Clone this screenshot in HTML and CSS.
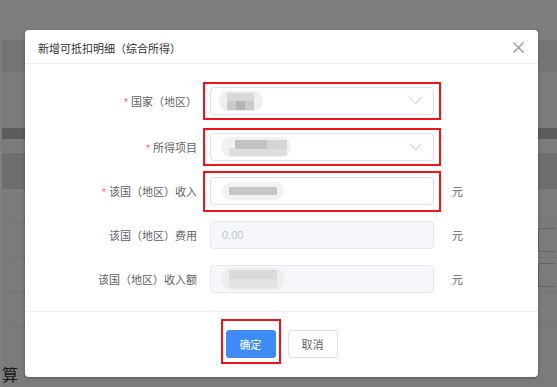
FILE: index.html
```html
<!DOCTYPE html>
<html lang="zh-CN">
<head>
    <meta charset="UTF-8">
    <meta name="viewport" content="width=device-width, initial-scale=1.0">
    <title>新增可抵扣明细</title>
    <link rel="stylesheet" href="styles.css">
</head>
<body>
    <div class="page">
        <div class="band band-top"></div>
        <div class="band band-tabs"></div>
        <div class="band band-plain"></div>
        <div class="band band-dark"></div>
        <div class="band band-gap"></div>
        <div class="band band-head"></div>
        <div class="band band-row"></div>
        <div class="band band-row tall"><span class="ghost-box"></span></div>
        <div class="band band-row tall"><span class="ghost-box"></span></div>
        <div class="band band-row"></div>
        <div class="band band-last"><span class="calc">算</span></div>
    </div>

    <div class="mask"></div>

    <div class="dialog">
        <div class="dialog-header">
            <span class="dialog-title">新增可抵扣明细（综合所得）</span>
            <svg class="close" width="11" height="11" viewBox="0 0 11 11">
                <path d="M0.5 0.5 L10.5 10.5 M10.5 0.5 L0.5 10.5" stroke="#909399" stroke-width="1.1" fill="none"/>
            </svg>
        </div>

        <div class="dialog-body">
            <div class="form-row first">
                <label class="form-label"><i class="req">*</i>国家（地区）</label>
                <div class="field marked">
                    <span class="blur blur-country"></span>
                    <svg class="arrow" width="11" height="6" viewBox="0 0 11 6">
                        <path d="M0.5 0.5 L5.5 5.5 L10.5 0.5" stroke="#c0c4cc" stroke-width="1" fill="none"/>
                    </svg>
                </div>
            </div>

            <div class="form-row">
                <label class="form-label"><i class="req">*</i>所得项目</label>
                <div class="field marked">
                    <span class="blur blur-item"></span>
                    <svg class="arrow" width="11" height="6" viewBox="0 0 11 6">
                        <path d="M0.5 0.5 L5.5 5.5 L10.5 0.5" stroke="#c0c4cc" stroke-width="1" fill="none"/>
                    </svg>
                </div>
            </div>

            <div class="form-row">
                <label class="form-label"><i class="req">*</i>该国（地区）收入</label>
                <div class="field marked tall-mark">
                    <span class="blur blur-income"></span>
                </div>
                <span class="unit">元</span>
            </div>

            <div class="form-row">
                <label class="form-label">该国（地区）费用</label>
                <div class="field disabled">0.00</div>
                <span class="unit">元</span>
            </div>

            <div class="form-row">
                <label class="form-label">该国（地区）收入额</label>
                <div class="field disabled">
                    <span class="blur blur-amount"></span>
                </div>
                <span class="unit">元</span>
            </div>
        </div>

        <div class="dialog-footer">
            <button class="btn btn-primary marked-btn">确定</button>
            <button class="btn">取消</button>
        </div>
    </div>
</body>
</html>
```

FILE: styles.css
```css
* {
    box-sizing: border-box;
}

body {
    margin: 0;
    width: 557px;
    height: 387px;
    overflow: hidden;
    position: relative;
    font-family: "Liberation Sans", "Noto Sans CJK SC", sans-serif;
    background-color: #fff;
}

/* page behind the dialog */
.page {
    height: 387px;
    overflow: hidden;
    border-left: 2px solid #fff;
}

.band {
    background-color: #f7f7f7;
}

.band-top {
    height: 40px;
    background-color: #fdfdfd;
}

.band-tabs {
    height: 32px;
    background-color: #e8e8e8;
}

.band-plain {
    height: 56px;
}

.band-dark {
    height: 11px;
    background-color: #b8b8b8;
}

.band-gap {
    height: 14px;
}

.band-head {
    height: 36px;
    background-color: #dcdcdc;
}

.band-row {
    height: 34px;
    border-bottom: 1px solid #e6e6e6;
    display: flex;
    justify-content: flex-end;
    align-items: center;
}

.band-row.tall {
    height: 35px;
}

.ghost-box {
    width: 17px;
    height: 24px;
    border: 1px solid #c8c8c8;
    border-right: none;
    border-radius: 3px 0 0 3px;
    margin-right: 2px;
}

.band-last {
    height: 60px;
    position: relative;
}

.calc {
    position: absolute;
    left: 0;
    bottom: 1px;
    font-size: 16px;
    line-height: 20px;
    color: #333;
}

.mask {
    position: absolute;
    inset: 0;
    background-color: rgba(0, 0, 0, 0.5);
}

/* dialog */
.dialog {
    position: absolute;
    left: 25px;
    top: 30px;
    width: 513px;
    background-color: #fff;
    border-radius: 4px;
    box-shadow: 0 1px 3px rgba(0, 0, 0, 0.3);
}

.dialog-header {
    height: 34px;
    padding: 0 14px 0 13px;
    display: flex;
    align-items: center;
    justify-content: space-between;
    border-bottom: 1px solid #ebeef5;
}

.dialog-title {
    font-size: 11px;
    color: #303133;
    padding-top: 2px;
}

.close {
    margin-top: 2px;
}

.dialog-body {
    padding: 23px 0 18px;
}

.form-row {
    display: flex;
    align-items: center;
    height: 28px;
    margin-top: 16px;
}

.form-row.first {
    margin-top: 0;
}

.form-row.first + .form-row {
    margin-top: 18px;
}

.form-label {
    width: 172px;
    margin-right: 13px;
    text-align: right;
    font-size: 11px;
    color: #606266;
}

.req {
    font-style: normal;
    color: #f56c6c;
    margin-right: 3px;
}

.field {
    position: relative;
    width: 224px;
    height: 28px;
    border: 1px solid #dcdfe6;
    border-radius: 4px;
    display: flex;
    align-items: center;
    padding: 0 12px 0 11px;
    font-size: 11px;
    color: #606266;
}

.field.disabled {
    background-color: #f5f7fa;
    border-color: #e4e7ed;
    color: #c0c4cc;
}

.marked::after {
    content: "";
    position: absolute;
    top: -6px;
    bottom: -6px;
    left: -8px;
    right: -8px;
    border: 2px solid #f0141a;
}

.tall-mark::after {
    top: -7px;
    bottom: -8px;
}

.arrow {
    margin-left: auto;
}

.unit {
    margin-left: 18px;
    font-size: 11px;
    color: #606266;
}

/* masked (blurred) values */
.blur {
    display: inline-block;
    border-radius: 9px;
    filter: blur(0.7px);
}

.blur-country {
    width: 44px;
    height: 20px;
    margin-left: -3px;
    background:
        linear-gradient(#b4b4b4, #b4b4b4) 17px 10px / 9px 9px no-repeat,
        linear-gradient(#cbcbcb, #cbcbcb) 8px 10px / 27px 9px no-repeat,
        linear-gradient(#d8d8d8, #d8d8d8) 8px 2px / 27px 8px no-repeat,
        #efefef;
}

.blur-item {
    width: 70px;
    height: 20px;
    margin-left: -1px;
    background:
        linear-gradient(#c2c2c2, #c2c2c2) 14px 3px / 32px 9px no-repeat,
        linear-gradient(#d4d4d4, #d4d4d4) 46px 3px / 20px 9px no-repeat,
        linear-gradient(#dedede, #dedede) 8px 11px / 58px 8px no-repeat,
        #f1f1f1;
}

.blur-income {
    width: 62px;
    height: 18px;
    margin-left: 0;
    background:
        linear-gradient(#c6c6c6, #c6c6c6) 7px 5px / 48px 8px no-repeat,
        #f2f2f2;
}

.blur-amount {
    width: 62px;
    height: 22px;
    margin-left: 0;
    background:
        linear-gradient(#dadada, #dadada) 7px 2px / 48px 9px no-repeat,
        linear-gradient(#e2e2e2, #e2e2e2) 7px 11px / 48px 9px no-repeat,
        #ededed;
}

/* footer */
.dialog-footer {
    border-top: 1px solid #ebeef5;
    padding: 18px 0 19px;
    display: flex;
    justify-content: center;
    gap: 12px;
}

.btn {
    position: relative;
    width: 50px;
    height: 28px;
    border: 1px solid #dcdfe6;
    border-radius: 3px;
    background-color: #fff;
    color: #606266;
    font-family: inherit;
    font-size: 11px;
    padding: 0;
}

.btn-primary {
    background-color: #3f8bf6;
    border-color: #3f8bf6;
    color: #fff;
}

.marked-btn::after {
    content: "";
    position: absolute;
    top: -12px;
    bottom: -7px;
    left: -6px;
    right: -6px;
    border: 2px solid #f0141a;
}
```
